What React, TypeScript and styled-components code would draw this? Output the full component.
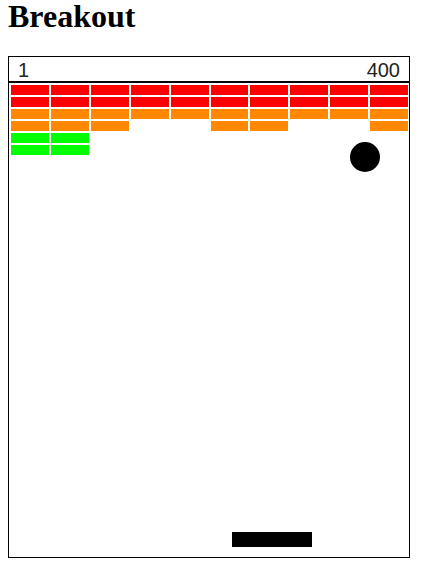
import styled, { createGlobalStyle } from 'styled-components';

type BrickColor = 'red' | 'orange' | 'green' | null;

const R: BrickColor = 'red';
const O: BrickColor = 'orange';
const G: BrickColor = 'green';
const _: BrickColor = null;

const rows: BrickColor[][] = [
    [R, R, R, R, R, R, R, R, R, R],
    [R, R, R, R, R, R, R, R, R, R],
    [O, O, O, O, O, O, O, O, O, O],
    [O, O, O, _, _, O, O, _, _, O],
    [G, G, _, _, _, _, _, _, _, _],
    [G, G, _, _, _, _, _, _, _, _]
];

const colors = {
    red: '#ff0000',
    orange: '#ff8800',
    green: '#00ff00'
};

const App = () => {
    return (
        <>
            <GlobalStyle />
            <Title>Breakout</Title>
            <Board>
                <ScoreBar>
                    <span>1</span>
                    <span>400</span>
                </ScoreBar>
                <Field>
                    <BrickGrid>
                        {rows.flatMap((row, r) =>
                            row.map((color, c) => (
                                <Brick key={`${r}-${c}`} $color={color} />
                            ))
                        )}
                    </BrickGrid>
                    <Ball />
                    <Paddle />
                </Field>
            </Board>
        </>
    );
};

export default App;

const GlobalStyle = createGlobalStyle`
    body {
        margin: 0 8px;
        background: #fff;
        font-family: 'Liberation Serif', 'Times New Roman', serif;
    }
`;

const Title = styled.h1`
    font-family: 'Liberation Serif', 'Times New Roman', serif;
    font-size: 32px;
    font-weight: bold;
    line-height: 32px;
    margin: 0 0 24px;
    color: #000;
`;

const Board = styled.div`
    width: 400px;
    border: 1px solid #000;
    display: flex;
    flex-direction: column;
`;

const ScoreBar = styled.div`
    height: 22px;
    padding: 2px 9px 0;
    display: flex;
    justify-content: space-between;
    font-family: 'Liberation Sans', Arial, sans-serif;
    font-size: 20px;
    line-height: 22px;
    color: #222;
    border-bottom: 2px solid #000;
`;

const Field = styled.div`
    position: relative;
    height: 474px;
`;

const BrickGrid = styled.div`
    display: grid;
    grid-template-columns: repeat(10, 1fr);
    grid-auto-rows: 10px;
    column-gap: 2px;
    row-gap: 2px;
    padding: 2px 1px 0 2px;
`;

const Brick = styled.div<{ $color: BrickColor }>`
    background: ${({ $color }) => ($color ? colors[$color] : 'transparent')};
`;

const Ball = styled.div`
    position: absolute;
    left: 341px;
    top: 59px;
    width: 30px;
    height: 30px;
    border-radius: 50%;
    background: #000;
`;

const Paddle = styled.div`
    position: absolute;
    left: 223px;
    top: 449px;
    width: 80px;
    height: 15px;
    background: #000;
`;
